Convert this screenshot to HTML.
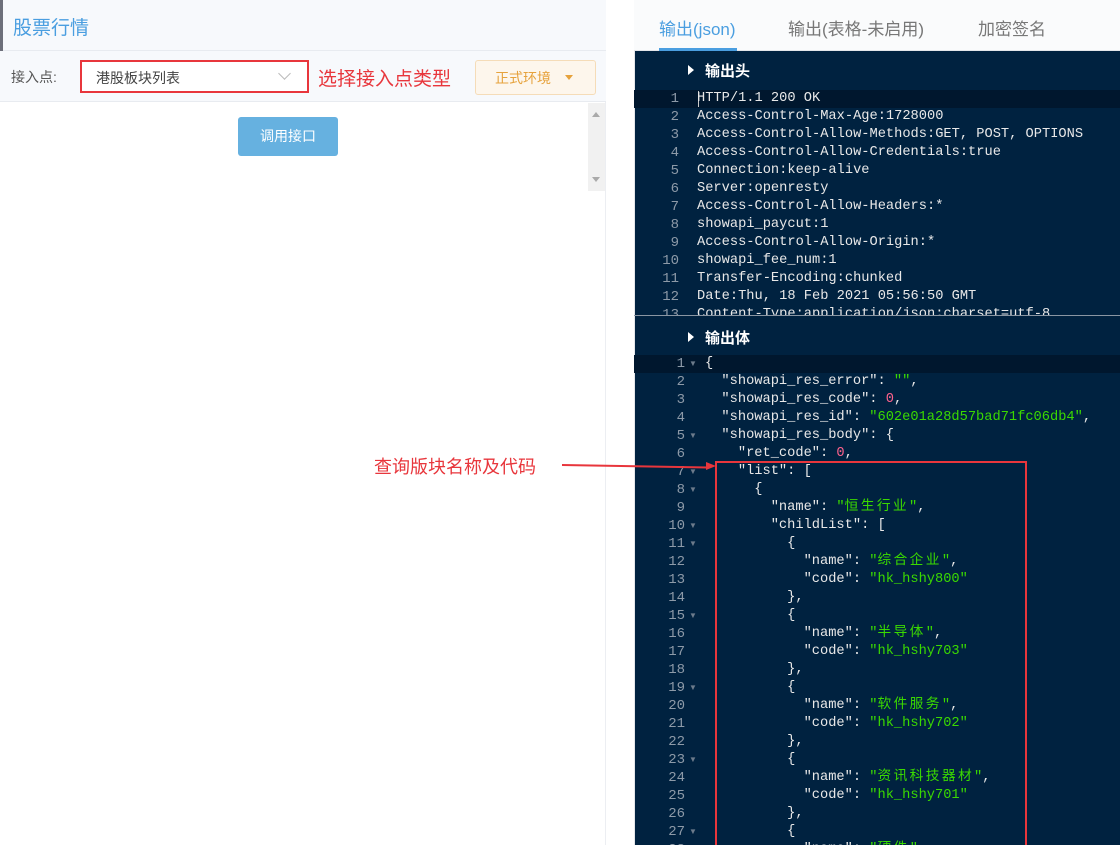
<!DOCTYPE html>
<html><head><meta charset="utf-8"><style>
*{margin:0;padding:0;box-sizing:border-box}
html,body{width:1120px;height:845px;overflow:hidden}
body{background:#fff;font-family:"Liberation Sans","Noto Sans CJK SC",sans-serif;position:relative}
.a{position:absolute}
.m{font-family:"Liberation Mono","Noto Sans CJK SC",monospace;font-size:13.7px;white-space:pre;color:#e8e8e8;line-height:18px}
.ln{position:absolute;width:40px;text-align:right;color:#8d9aa8;font-family:"Liberation Mono",monospace;font-size:14px;line-height:18px}
.f{position:absolute;color:#6c7b8b;font-size:8px;line-height:18px}
.s{color:#3ad900}.n{color:#ff628c}.c{letter-spacing:2.4px}
</style></head><body>
<div class="a" style="left:0;top:0;width:606px;height:845px;background:#fff;border-right:1px solid #eceef2"></div>
<div class="a" style="left:0;top:0;width:606px;height:51px;background:#f7f9fc;border-bottom:1px solid #e8ebf0"></div>
<div class="a" style="left:0;top:0;width:3px;height:51px;background:#6d6f7a"></div>
<div class="a" style="left:13px;top:13px;font-size:19px;color:#4a9ee0">股票行情</div>
<div class="a" style="left:0;top:51px;width:606px;height:51px;background:#f7f9fc;border-bottom:1px solid #e8ebf0"></div>
<div class="a" style="left:11px;top:67px;font-size:14px;color:#555">接入点:</div>
<div class="a" style="left:80px;top:60px;width:229px;height:33px;border:2px solid #e8363c;background:#fff"></div>
<div class="a" style="left:96px;top:68px;font-size:14px;color:#444">港股板块列表</div>
<div class="a" style="left:280px;top:69px;width:9px;height:9px;border-right:1px solid #bbb;border-bottom:1px solid #bbb;transform:rotate(45deg)"></div>
<div class="a" style="left:318px;top:64px;font-size:19px;color:#e8363c">选择接入点类型</div>
<div class="a" style="left:475px;top:60px;width:121px;height:35px;border:1px solid #f5dcb8;background:#fdf6ec;border-radius:3px"></div>
<div class="a" style="left:495px;top:68px;font-size:14px;color:#e6a23c">正式环境</div>
<div class="a" style="left:565px;top:75px;width:0;height:0;border-left:4px solid transparent;border-right:4px solid transparent;border-top:5px solid #e6a23c"></div>
<div class="a" style="left:238px;top:117px;width:100px;height:39px;background:#66b1e0;border-radius:3px;color:#fff;font-size:14px;text-align:center;line-height:39px">调用接口</div>
<div class="a" style="left:588px;top:103px;width:17px;height:88px;background:#f1f1f1"></div>
<div class="a" style="left:592px;top:112px;border-left:4px solid transparent;border-right:4px solid transparent;border-bottom:5px solid #aaa"></div>
<div class="a" style="left:592px;top:177px;border-left:4px solid transparent;border-right:4px solid transparent;border-top:5px solid #aaa"></div>
<div class="a" style="left:374px;top:453px;font-size:18px;color:#e8363c">查询版块名称及代码</div>
<div class="a" style="left:634px;top:0;width:486px;height:845px;background:#002240;border-left:1px solid #e4e6ea"></div>
<div class="a" style="left:634px;top:0;width:486px;height:51px;background:#fafbfc;border-bottom:1px solid #e4e6ea"></div>
<div class="a" style="left:659px;top:15px;font-size:17px;color:#4a9ee0">输出(json)</div>
<div class="a" style="left:659px;top:48px;width:78px;height:3px;background:#4a9ee0"></div>
<div class="a" style="left:788px;top:15px;font-size:17px;color:#777">输出(表格-未启用)</div>
<div class="a" style="left:978px;top:15px;font-size:17px;color:#777">加密签名</div>
<div class="a" style="left:688px;top:65px;border-top:5px solid transparent;border-bottom:5px solid transparent;border-left:6px solid #fff"></div>
<div class="a" style="left:705px;top:60px;font-size:15px;color:#fff;font-weight:bold">输出头</div>
<div class="a" style="left:634px;top:90px;width:486px;height:225px;overflow:hidden">
<div class="a" style="left:0;top:0;width:486px;height:18px;background:#00172e"></div>
<div class="a" style="left:64px;top:1px;width:1px;height:16px;background:#ccc"></div>
<div id="hd"></div>
</div>
<div class="a" style="left:634px;top:315px;width:486px;height:1px;background:#8a96a3"></div>
<div class="a" style="left:688px;top:332px;border-top:5px solid transparent;border-bottom:5px solid transparent;border-left:6px solid #fff"></div>
<div class="a" style="left:705px;top:327px;font-size:15px;color:#fff;font-weight:bold">输出体</div>
<div class="a" style="left:634px;top:355px;width:486px;height:18px;background:#00172e"></div>
<div class="a" style="left:634px;top:355px;width:486px;height:490px;overflow:hidden"><div id="bd"></div></div>
<div class="a" style="left:715px;top:461px;width:312px;height:390px;border:2px solid #e8363c"></div>
<div class="a" style="left:562px;top:464px;width:146px;height:2px;background:#e8363c;transform:rotate(1deg);transform-origin:left"></div>
<div class="a" style="left:706px;top:462px;border-top:4px solid transparent;border-bottom:4px solid transparent;border-left:10px solid #e8363c"></div>
<script>
var h=["HTTP/1.1 200 OK","Access-Control-Max-Age:1728000","Access-Control-Allow-Methods:GET, POST, OPTIONS","Access-Control-Allow-Credentials:true","Connection:keep-alive","Server:openresty","Access-Control-Allow-Headers:*","showapi_paycut:1","Access-Control-Allow-Origin:*","showapi_fee_num:1","Transfer-Encoding:chunked","Date:Thu, 18 Feb 2021 05:56:50 GMT","Content-Type:application/json;charset=utf-8"];
var s="";h.forEach(function(t,i){var y=i*18;s+='<div class="ln" style="left:5px;top:'+y+'px">'+(i+1)+'</div><div class="a m" style="left:63px;top:'+y+'px">'+t+'</div>';});
document.getElementById('hd').innerHTML=s;
function S(x){return '<span class="s">"'+x+'"</span>'}
function C(x){return '<span class="s">"<span class="c">'+x+'</span>"</span>'}
var b=[
['{',1],['  "showapi_res_error": '+S('')+',',0],['  "showapi_res_code": <span class="n">0</span>,',0],['  "showapi_res_id": '+S('602e01a28d57bad71fc06db4')+',',0],['  "showapi_res_body": {',1],['    "ret_code": <span class="n">0</span>,',0],['    "list": [',1],['      {',1],['        "name": '+C('恒生行业')+',',0],['        "childList": [',1],['          {',1],['            "name": '+C('综合企业')+',',0],['            "code": '+S('hk_hshy800'),0],['          },',0],['          {',1],['            "name": '+C('半导体')+',',0],['            "code": '+S('hk_hshy703'),0],['          },',0],['          {',1],['            "name": '+C('软件服务')+',',0],['            "code": '+S('hk_hshy702'),0],['          },',0],['          {',1],['            "name": '+C('资讯科技器材')+',',0],['            "code": '+S('hk_hshy701'),0],['          },',0],['          {',1],['            "name": '+C('硬件'),0]];
s="";b.forEach(function(l,i){var y=i*18;s+='<div class="ln" style="left:11px;top:'+y+'px">'+(i+1)+'</div>'+(l[1]?'<div class="f" style="left:55px;top:'+y+'px">▼</div>':'')+'<div class="a m" style="left:71px;top:'+y+'px">'+l[0]+'</div>';});
document.getElementById('bd').innerHTML=s;
</script>
</body></html>
